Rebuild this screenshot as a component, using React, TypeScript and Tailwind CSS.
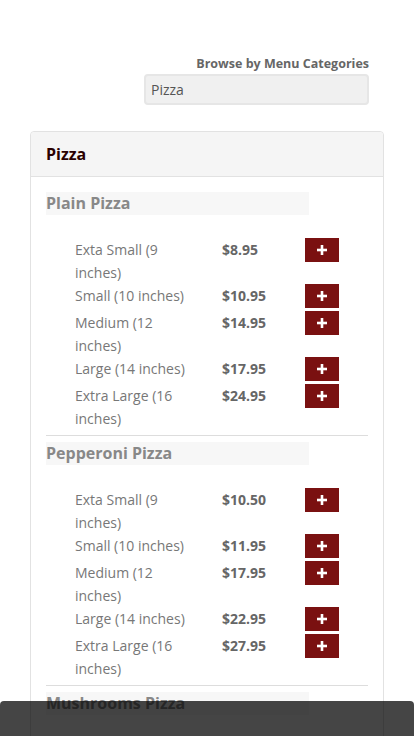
import React from 'react';

type Item = { name: string; price: string };

const sections: { title: string; items: Item[] }[] = [
  {
    title: 'Plain Pizza',
    items: [
      { name: 'Exta Small (9 inches)', price: '$8.95' },
      { name: 'Small (10 inches)', price: '$10.95' },
      { name: 'Medium (12 inches)', price: '$14.95' },
      { name: 'Large (14 inches)', price: '$17.95' },
      { name: 'Extra Large (16 inches)', price: '$24.95' },
    ],
  },
  {
    title: 'Pepperoni Pizza',
    items: [
      { name: 'Exta Small (9 inches)', price: '$10.50' },
      { name: 'Small (10 inches)', price: '$11.95' },
      { name: 'Medium (12 inches)', price: '$17.95' },
      { name: 'Large (14 inches)', price: '$22.95' },
      { name: 'Extra Large (16 inches)', price: '$27.95' },
    ],
  },
  {
    title: 'Mushrooms Pizza',
    items: [
      { name: 'Exta Small (9 inches)', price: '$10.50' },
      { name: 'Small (10 inches)', price: '$11.95' },
      { name: 'Medium (12 inches)', price: '$17.95' },
    ],
  },
];

const PlusIcon = () => (
  <svg width="10" height="10" viewBox="0 0 10 10">
    <rect x="3.7" y="0" width="2.6" height="10" fill="#fff" />
    <rect x="0" y="3.7" width="10" height="2.6" fill="#fff" />
  </svg>
);

const App = () => {
  return (
    <div className="min-h-screen bg-white font-['Open_Sans',sans-serif] pb-10">
      {/* Category picker */}
      <div className="pt-[55px] pr-[45px] flex flex-col items-end">
        <label className="text-[12.5px] leading-[17px] font-bold text-[#666]">Browse by Menu Categories</label>
        <div className="mt-[2px] w-[225px] h-[31px] rounded-[4px] bg-[#f0f0f0] border-2 border-[#e6e6e6] flex items-center px-[5px] text-[14px] text-[#555]">
          Pizza
        </div>
      </div>

      {/* Panel */}
      <div className="mx-[30px] mt-[26px] border border-[#e2e2e2] rounded-[4px]">
        <div className="h-[45px] bg-[#f5f5f5] border-b border-[#e2e2e2] rounded-t-[4px] px-[15px] flex items-center">
          <h2 className="text-[16px] font-bold text-[#2a0000]">Pizza</h2>
        </div>
        <div className="px-[15px] pt-[15px]">
          {sections.map((section, i) => (
            <div key={i}>
              {i > 0 && <div className="mt-[5px] mb-[6px] border-t border-[#dddddd]" />}
              <div className="w-[263px] h-[23px] bg-[#f7f7f7] text-[16px] leading-[23px] font-bold text-[#888]">
                {section.title}
              </div>
              <div className="mt-[23px] pl-[29px]">
                {section.items.map((item, j) => (
                  <div key={j} className="flex items-start">
                    <div className="w-[147px] pr-[27px] text-[14px] leading-[23px] text-[#777]">{item.name}</div>
                    <div className="w-[83px] text-[14px] leading-[23px] font-bold text-[#666]">{item.price}</div>
                    <button className="w-[34px] h-[24px] mb-[3px] bg-[#7a1111] flex items-center justify-center">
                      <PlusIcon />
                    </button>
                  </div>
                ))}
              </div>
            </div>
          ))}
        </div>
      </div>

      {/* Bottom bar */}
      <div className="fixed bottom-0 left-0 right-0 h-[35px] rounded-t-[4px] bg-[rgba(0,0,0,0.73)]" />
    </div>
  );
};

export default App;
